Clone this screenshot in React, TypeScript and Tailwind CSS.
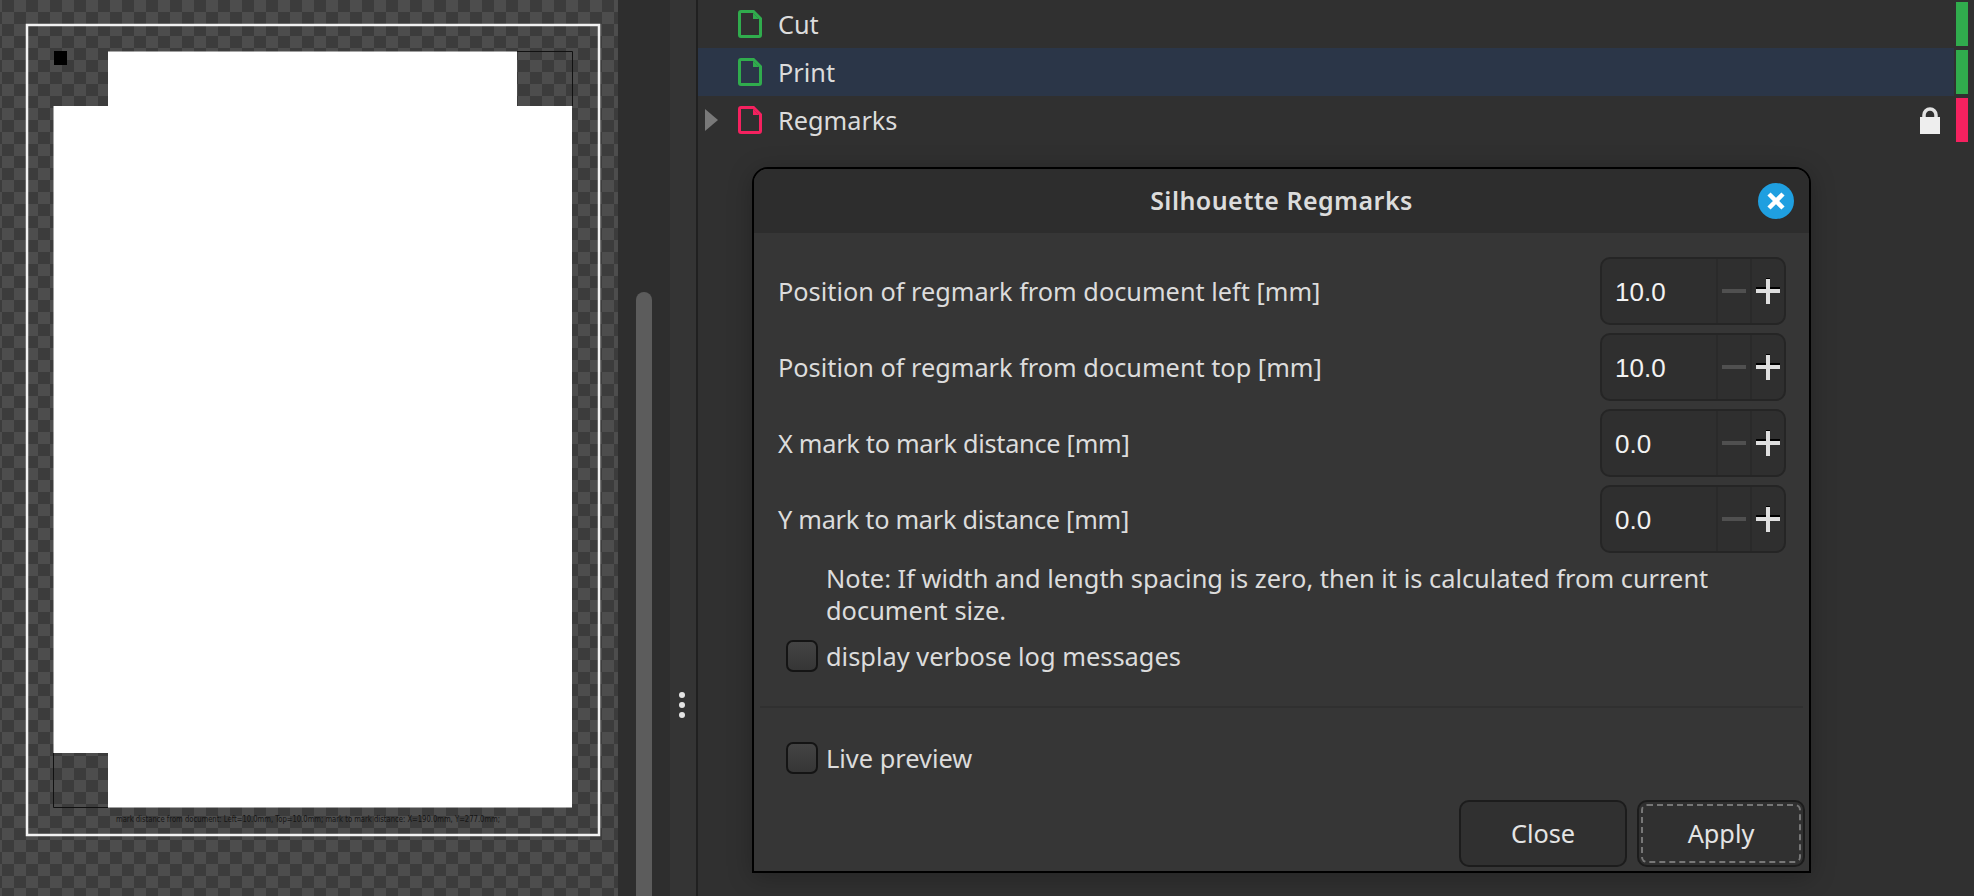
import React from 'react';

const sans = 'font-["Noto_Sans",sans-serif]';

const FileIcon = ({ color }: { color: string }) => (
  <svg width="24" height="28" viewBox="0 0 24 28" className="shrink-0">
    <path d="M1.5 3 Q1.5 1.5 3 1.5 H15.5 L22.5 8.5 V25 Q22.5 26.5 21 26.5 H3 Q1.5 26.5 1.5 25 Z" fill="none" stroke={color} strokeWidth="3" />
    <path d="M15 3 L21 9 H15 Z" fill={color} />
  </svg>
);

const LayerRow = ({ name, color, selected, locked, arrow }: { name: string; color: string; selected?: boolean; locked?: boolean; arrow?: boolean }) => (
  <div className="flex h-12">
    <div className={`flex flex-1 items-center ${selected ? 'bg-[#2b3648]' : ''}`}>
      <div className="w-10 flex justify-end pr-[20px]">
        {arrow && (
          <svg width="13" height="22" viewBox="0 0 13 22">
            <path d="M0 0 L13 11 L0 22 Z" fill="#797979" />
          </svg>
        )}
      </div>
      <FileIcon color={color} />
      <span className="ml-[16px] pt-[1px] text-[25.3px] text-[#dcdcdc]">{name}</span>
      {locked && (
        <svg width="20" height="28" viewBox="0 0 20 28" className="ml-auto mr-[14px]">
          <path d="M4 13 V9 A6 6 0 0 1 16 9 V13" fill="none" stroke="#e2e2e2" strokeWidth="3.5" />
          <rect x="0" y="11" width="20" height="17" fill="#eeeeee" />
        </svg>
      )}
    </div>
    <div className="w-[20px] py-[2px] pl-[2px] pr-[6px]">
      <div className="h-full" style={{ backgroundColor: color }} />
    </div>
  </div>
);

const SpinRow = ({ label, value, tight }: { label: string; value: string; tight?: boolean }) => (
  <div className="flex h-[68px] items-center justify-between">
    <span className={`pt-[1px] text-[25.3px] text-[#dcdcdc] ${tight ? 'tracking-[-0.28px]' : ''}`}>{label}</span>
    <div className="flex h-[68px] w-[186px] rounded-[10px] border-2 border-[#252525] bg-[#2f2f2f]">
      <div className='flex-1 self-center pl-[13px] pt-[2px] text-[26px] text-[#f2f2f2] font-["Liberation_Sans",sans-serif]'>{value}</div>
      <div className="flex w-[34px] items-center justify-center border-l-2 border-[#2a2a2a]">
        <div className="h-1 w-6 bg-[#505050]" />
      </div>
      <div className="flex w-[34px] items-center justify-center border-l-2 border-[#2a2a2a]">
        <svg width="24" height="26" viewBox="0 0 24 26">
          <path d="M10 0 H14 V2 H10 Z M0 9 H24 V11 H0 Z" fill="#000" />
          <path d="M10 1 H14 V11 H24 V15 H14 V26 H10 V15 H0 V11 H10 Z" fill="#dfdfdf" />
        </svg>
      </div>
    </div>
  </div>
);

const Check = ({ label }: { label: string }) => (
  <div className="flex items-center gap-[8px]">
    <div className="size-8 rounded-[7px] border-2 border-[#141414] bg-gradient-to-b from-[#444444] to-[#363636]" />
    <span className="pt-[1px] text-[25.4px] leading-[32px] text-[#dcdcdc]">{label}</span>
  </div>
);

export default function App() {
  return (
    <div className={`flex h-[896px] w-[1974px] overflow-hidden bg-[#303030] ${sans}`}>
      {/* canvas preview */}
      <div className="relative h-full w-[618px] bg-[conic-gradient(#4d4d4d_25%,#3c3c3c_0_50%,#4d4d4d_0_75%,#3c3c3c_0)] bg-[length:24px_24px] bg-[position:2px_0]">
        <svg width="618" height="896" className="absolute inset-0">
          <rect x="27" y="25" width="572" height="810" fill="none" stroke="#f2f2f2" strokeWidth="2.5" />
          <path d="M108 51.5 H517 V106 H572 V807.5 H108 V753 H53.5 V106 H108 Z" fill="#ffffff" />
          <path d="M517 51.5 H572.5 V106 M53.5 753 V807.5 H108" fill="none" stroke="#111" strokeWidth="1" />
          <rect x="54" y="51" width="13" height="14" fill="#000" />
          <text x="116" y="822" fontSize="8" textLength="384" lengthAdjust="spacingAndGlyphs" fill="#151515" fontFamily="DejaVu Sans">mark distance from document: Left=10.0mm, Top=10.0mm; mark to mark distance: X=190.0mm, Y=277.0mm;</text>
        </svg>
      </div>

      {/* scrollbar */}
      <div className="h-full w-[52px] bg-[#2e2e2e] pl-[18px] pt-[292px]">
        <div className="h-full w-4 rounded-t-full bg-[#5c5c5c]" />
      </div>

      {/* splitter */}
      <div className="flex h-full w-[26px] flex-col items-center gap-[4px] bg-[#343434] pt-[692px] pr-[2px]">
        <div className="h-[6px] w-[6px] rounded-full bg-[#e4e4e4]" />
        <div className="h-[6px] w-[6px] rounded-full bg-[#e4e4e4]" />
        <div className="h-[6px] w-[6px] rounded-full bg-[#e4e4e4]" />
      </div>
      <div className="h-full w-[2px] bg-[#202020]" />

      {/* layers panel */}
      <div className="h-full flex-1">
        <LayerRow name="Cut" color="#30ac4d" />
        <LayerRow name="Print" color="#30ac4d" selected />
        <LayerRow name="Regmarks" color="#f5215f" locked arrow />

        {/* dialog */}
        <div className="ml-[54px] mt-[23px] flex h-[706px] w-[1059px] flex-col overflow-hidden rounded-t-[16px] border-2 border-black bg-[#363636] shadow-[0_4px_24px_rgba(0,0,0,0.25)]">
          <div className="relative flex h-[64px] shrink-0 items-center justify-center bg-[#2d2d2d]">
            <span className="text-[25px] font-semibold tracking-[0.45px] text-[#dcdcdc]">Silhouette Regmarks</span>
            <div className="absolute right-[15px] top-[14px] flex size-9 items-center justify-center rounded-full bg-[#1f9fe0]">
              <svg width="18" height="18" viewBox="0 0 18 18">
                <path d="M2 2 L16 16 M16 2 L2 16" stroke="#fff" strokeWidth="4.5" />
              </svg>
            </div>
          </div>

          <div className="flex flex-1 flex-col">
            <div className="flex flex-col gap-2 pl-[24px] pr-[23px] pt-[24px]">
              <SpinRow label="Position of regmark from document left [mm]" value="10.0" />
              <SpinRow label="Position of regmark from document top [mm]" value="10.0" />
              <SpinRow label="X mark to mark distance [mm]" value="0.0" tight />
              <SpinRow label="Y mark to mark distance [mm]" value="0.0" tight />
            </div>
            <div className="ml-[72px] mt-[9px] w-[900px] text-[25.4px] leading-[32px] text-[#dcdcdc]">
              Note: If width and length spacing is zero, then it is calculated from current document size.
            </div>
            <div className="ml-[32px] mt-[13px]">
              <Check label="display verbose log messages" />
            </div>
            <div className="mx-[6px] mt-[34px] h-[2px] bg-[#303030]" />
            <div className="ml-[32px] mt-[33px]">
              <Check label="Live preview" />
            </div>
            <div className="mt-auto flex justify-end gap-[10px] pb-[4px] pr-[4px]">
              <div className="flex h-[67px] w-[168px] items-center justify-center rounded-[10px] border-2 border-[#1c1c1c] bg-[#303030] pt-[1px] text-[25.3px] text-[#e4e4e4]">
                Close
              </div>
              <div className="flex h-[67px] w-[168px] items-center justify-center rounded-[10px] border-2 border-[#1c1c1c] bg-[#303030] p-[2px] text-[25.3px] text-[#e4e4e4]">
                <div className="flex h-full w-full items-center justify-center rounded-[6px] border-2 border-dashed border-[#777777] pt-[1px]">
                  Apply
                </div>
              </div>
            </div>
          </div>
        </div>
      </div>
    </div>
  );
}
